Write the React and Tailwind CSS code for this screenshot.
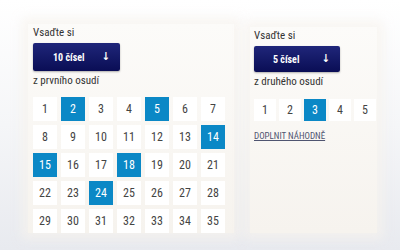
const first = [2, 5, 14, 15, 18, 24];
const nums = Array.from({ length: 35 }, (_, i) => i + 1);

function BetButton({ label, className }) {
  return (
    <div className={`flex items-center whitespace-nowrap rounded-[2px] bg-gradient-to-b from-[#20267a] to-[#0a0d55] text-white shadow-[0_1px_2px_rgba(0,0,0,0.3)] ${className}`}>
      <span className="text-[10px] font-bold">{label}</span>
      <span className="text-[11px] font-bold">↓</span>
    </div>
  );
}

export default function App() {
  return (
    <div className="w-[400px] h-[250px] overflow-hidden bg-gradient-to-b from-white via-[#f5f6f8] to-[#e8eaef] text-[#333] [font-family:'Roboto_Condensed','DejaVu_Sans_Condensed',Roboto,sans-serif] flex">
      {/* first drum */}
      <div className="ml-[28px] mt-[24px] w-[206px] h-[209px] px-[5px] pt-[2px] bg-gradient-to-b from-[#fcfbf9] to-[#f6f3ee] shadow-[0_0_10px_6px_rgba(246,242,237,0.7)]">
        <div className="text-[11px] leading-[14px]">Vsaďte si</div>
        <BetButton label="10 čísel" className="mt-[3px] w-[87px] h-[28px] pl-[20px] gap-[17px]" />
        <div className="mt-[3px] text-[11px] leading-[14px]">z prvního osudí</div>
        <div className="mt-[9px] grid grid-cols-[repeat(7,24px)] gap-[4px]">
          {nums.map(n => (
            <div key={n}
              className={`h-[24px] flex items-center justify-center text-[12px] ${first.includes(n) ? 'bg-[#0b88c6] text-white' : 'bg-white text-[#444]'}`}>
              {n}
            </div>
          ))}
        </div>
      </div>

      {/* second drum */}
      <div className="ml-[16px] mt-[27px] w-[127px] h-[206px] px-[4px] pt-[2px] bg-gradient-to-b from-[#fcfbf9] to-[#f6f3ee] shadow-[0_0_10px_6px_rgba(246,242,237,0.7)]">
        <div className="text-[11px] leading-[14px]">Vsaďte si</div>
        <BetButton label="5 čísel" className="mt-[3px] w-[86px] h-[26px] pl-[19px] gap-[22px]" />
        <div className="mt-[3px] text-[11px] leading-[14px]">z druhého osudí</div>
        <div className="mt-[10px] flex gap-[3px]">
          {[1, 2, 3, 4, 5].map(n => (
            <div key={n}
              className={`w-[22px] h-[22px] shrink-0 flex items-center justify-center text-[12px] ${n === 3 ? 'bg-[#0b88c6] text-white' : 'bg-white text-[#444]'}`}>
              {n}
            </div>
          ))}
        </div>
        <div className="mt-[9px] text-[9px] leading-[12px] text-[#4f5470] underline">DOPLNIT NÁHODNĚ</div>
      </div>
    </div>
  );
}
